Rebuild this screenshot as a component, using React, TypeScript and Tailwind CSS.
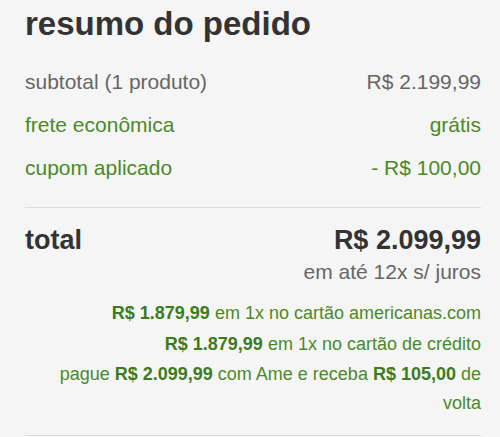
import React from 'react'

const ROWS = [
    { label: 'subtotal (1 produto)', value: 'R$ 2.199,99', tone: 'text-[#666666]' },
    { label: 'frete econômica', value: 'grátis', tone: 'text-[#4b8a26]' },
    { label: 'cupom aplicado', value: '- R$ 100,00', tone: 'text-[#4b8a26]' },
]

function Strong({ children }: { children: React.ReactNode }) {
    return <b className="font-bold text-[#3b7c1c]">{children}</b>
}

export default function App() {
    return (
        <div
            className="min-h-[437px] w-[500px] bg-[#f5f5f5] pl-[25px] pr-[19px] overflow-hidden"
            style={{ fontFamily: '"Liberation Sans", Arial, sans-serif' }}
        >
            <h2 className="pt-[4px] text-[33px] leading-[40px] font-bold text-[#333333]">
                resumo do pedido
            </h2>

            {/* line items */}
            <div className="mt-[26px] flex flex-col gap-[19px]">
                {ROWS.map((row) => (
                    <div
                        key={row.label}
                        className={`flex items-center justify-between text-[21px] leading-[24px] ${row.tone}`}
                    >
                        <span>{row.label}</span>
                        <span>{row.value}</span>
                    </div>
                ))}
            </div>

            <div className="mt-[27px] h-px bg-[#dddddd]" />

            {/* total */}
            <div className="mt-[17px] flex justify-between">
                <span className="text-[27px] leading-[30px] font-bold text-[#333333]">total</span>
                <div className="flex flex-col items-end">
                    <span className="text-[27px] leading-[30px] font-bold text-[#333333]">R$ 2.099,99</span>
                    <span className="mt-[5px] text-[21px] leading-[24px] text-[#666666]">em até 12x s/ juros</span>
                </div>
            </div>

            {/* payment options */}
            <div className="mt-[14px] flex flex-col text-right text-[18px] leading-[31px] text-[#4b8a26]">
                <p>
                    <Strong>R$ 1.879,99</Strong> em 1x no cartão americanas.com
                </p>
                <p>
                    <Strong>R$ 1.879,99</Strong> em 1x no cartão de crédito
                </p>
                <p className="leading-[29px]">
                    pague <Strong>R$ 2.099,99</Strong> com Ame e receba <Strong>R$ 105,00</Strong> de volta
                </p>
            </div>

            <div className="mt-[17px] h-px bg-[#dddddd]" />
        </div>
    )
}
